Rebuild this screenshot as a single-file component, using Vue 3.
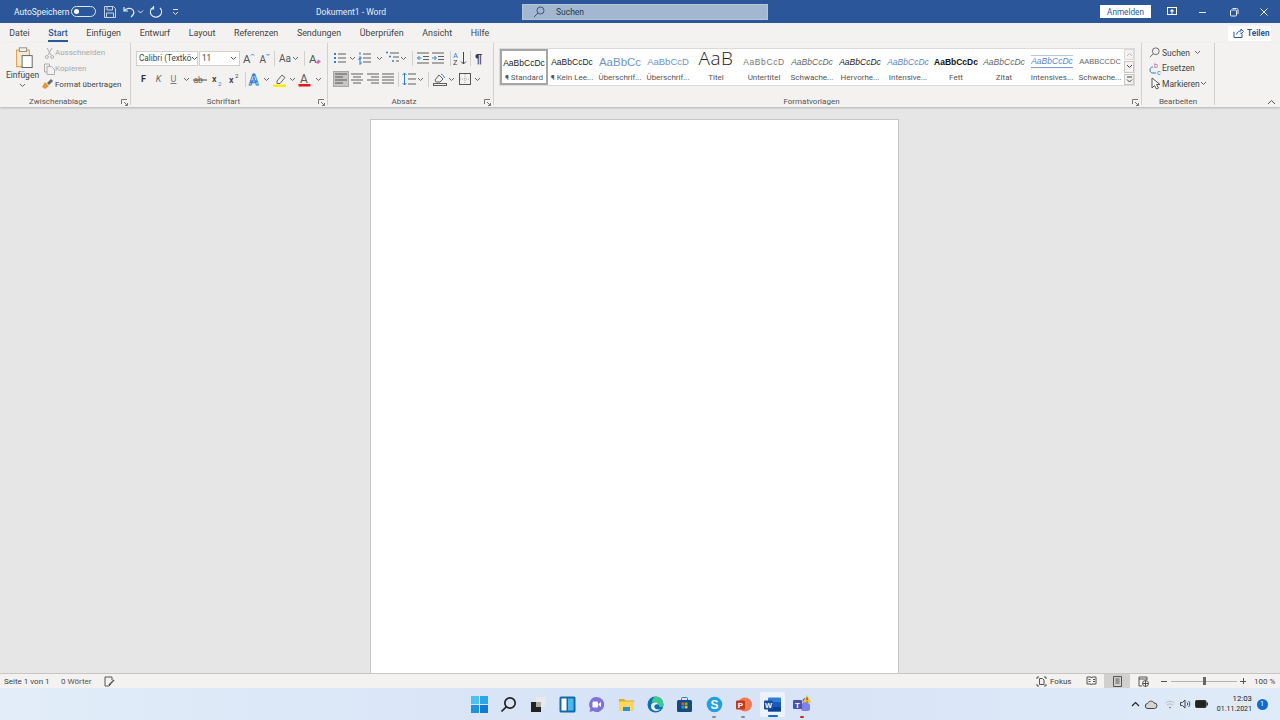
<script setup>
const blue = '#2f7fd0'
const gray = '#5f5f5f'
const dark = '#444'
const tf = 'font-family="Roboto, sans-serif"'

const icons = {
  bullets: `<g fill="${blue}"><rect x="2" y="3" width="2" height="2"/><rect x="2" y="7" width="2" height="2"/><rect x="2" y="11" width="2" height="2"/></g><path d="M6 4h8M6 8h8M6 12h8" stroke="${gray}"/>`,
  numbers: `<path d="M3 2v3M2 7h2v1.500H2V10h2M2 12h2v2H2" stroke="${blue}" fill="none"/><path d="M6 4h8M6 8h8M6 12h8" stroke="${gray}"/>`,
  multi: `<path d="M1 2.500h2M4 6.500h2M7 11h2" stroke="${blue}" stroke-width="1.500"/><path d="M5 3h9M8 7h6M11 11h3" stroke="${gray}"/>`,
  outdent: `<path d="M2 3h12M8 6.500h6M8 9.500h6M2 13h12" stroke="${gray}"/><path d="M6.500 8H2.500M4.500 6 2.500 8l2 2" stroke="${blue}" fill="none"/>`,
  indent: `<path d="M2 3h12M8 6.500h6M8 9.500h6M2 13h12" stroke="${gray}"/><path d="M2 8h4M4.500 6l2 2-2 2" stroke="${blue}" fill="none"/>`,
  sort: `<text x="1" y="7.500" font-size="7.500" fill="${blue}" ${tf}>A</text><text x="1" y="15" font-size="7.500" fill="${dark}" ${tf}>Z</text><path d="M11.500 2v12M9 11.500l2.500 2.500 2.500-2.500" stroke="${dark}" fill="none"/>`,
  pilcrow: `<text x="3" y="13" font-size="13" font-weight="700" fill="#3c3c3c" font-family="Liberation Sans, sans-serif">¶</text>`,
  left: `<path d="M2 3h12M2 6h8M2 9h12M2 12h8" stroke="#555" stroke-width="1.100"/>`,
  center: `<path d="M2 3h12M4 6h8M2 9h12M4 12h8" stroke="${gray}" stroke-width="1.100"/>`,
  right: `<path d="M2 3h12M6 6h8M2 9h12M6 12h8" stroke="${gray}" stroke-width="1.100"/>`,
  justify: `<path d="M2 3h12M2 6h12M2 9h12M2 12h12" stroke="${gray}" stroke-width="1.100"/>`,
  line: `<path d="M7 3h8M7 8h8M7 13h8" stroke="${gray}"/><path d="M3.500 2v12M1.500 4l2-2 2 2M1.500 12l2 2 2-2" stroke="${blue}" fill="none"/>`,
  shade: `<path d="M3 9l4-5 4 4-3 3H4z" fill="none" stroke="${gray}"/><path d="M9 3c2 1 3 2 3.500 4" stroke="${blue}" fill="none"/><rect x="1.500" y="12.500" width="13" height="2" fill="#f3f2f1" stroke="${gray}"/>`,
  borders: `<rect x="2.500" y="2.500" width="11" height="11" fill="none" stroke="#555"/><path d="M8 3v10M3 8h10" stroke="#aaa" stroke-dasharray="1 1"/>`,
  grow: `<text x="3" y="13" font-size="11.500" fill="#555" ${tf}>A</text><path d="M11 5.500l1.500-1.500 1.500 1.500" stroke="${blue}" fill="none"/>`,
  shrink: `<text x="3.500" y="13" font-size="10" fill="#555" ${tf}>A</text><path d="M10.500 4l1.500 1.500 1.500-1.500" stroke="${blue}" fill="none"/>`,
  clear: `<text x="3" y="12.500" font-size="11.500" fill="#555" ${tf}>A</text><path d="M9.500 12.500l3-3 2.500 2-3 2.500z" fill="#c774c7"/>`,
  strike: `<text x="1.500" y="12" font-size="8.500" fill="#666" ${tf}>ab</text><path d="M1 9h14" stroke="#444"/>`,
  sub: `<text x="3" y="11" font-size="9" font-weight="600" fill="#444" ${tf}>x</text><text x="9" y="14.500" font-size="6" fill="${blue}" ${tf}>2</text>`,
  sup: `<text x="3" y="12" font-size="9" font-weight="600" fill="#444" ${tf}>x</text><text x="9" y="7" font-size="6" fill="${dark}" ${tf}>2</text>`,
  effect: `<text x="2" y="14" font-size="14" font-weight="700" fill="#fff" stroke="${blue}" stroke-width=".9" ${tf}>A</text>`,
  marker: `<path d="M5 10l5-6 3 2.500-5 6H5z" fill="none" stroke="#666"/><rect x="1" y="13.500" width="13" height="2.500" fill="#ffeb00"/>`,
  color: `<text x="3" y="11.500" font-size="12" fill="#555" ${tf}>A</text><rect x="1.500" y="13" width="12" height="2.500" fill="#e8141c"/>`
}

const fontRow = [
  { w: 15, label: 'F', cls: 'bold' }, { w: 15, label: 'K', cls: 'italic' }, { w: 15, label: 'U', cls: 'under' }, { w: 11, chev: true },
  { w: 16, icon: 'strike' }, { w: 17, icon: 'sub' }, { w: 17, icon: 'sup' }, { w: 6, sep: true },
  { w: 13, icon: 'effect' }, { w: 10, chev: true }, { w: 18, icon: 'marker' }, { w: 6, chev: true },
  { w: 20, icon: 'color' }, { w: 6, chev: true }
]
const paraTop = [
  { w: 14, icon: 'bullets' }, { w: 11, chev: true }, { w: 14, icon: 'numbers' }, { w: 14, chev: true },
  { w: 14, icon: 'multi' }, { w: 6, chev: true }, { w: 12, sep: true }, { w: 10, icon: 'outdent' },
  { w: 20, icon: 'indent' }, { w: 4, sep: true }, { w: 15, icon: 'sort' }, { w: 6, sep: true }, { w: 14, icon: 'pilcrow' }
]
const paraBottom = [
  { w: 16, icon: 'left', on: true }, { w: 16, icon: 'center' }, { w: 15, icon: 'right' }, { w: 16, icon: 'justify' },
  { w: 4, sep: true }, { w: 18, icon: 'line' }, { w: 4, chev: true }, { w: 12, sep: true }, { w: 12, icon: 'shade' },
  { w: 10, chev: true }, { w: 18, icon: 'borders' }, { w: 6, chev: true }
]

const tabs = ['Datei', 'Start', 'Einfügen', 'Entwurf', 'Layout', 'Referenzen', 'Sendungen', 'Überprüfen', 'Ansicht', 'Hilfe']

const styles = [
  { label: '¶ Standard', cls: 's-normal', text: 'AaBbCcDc', on: true },
  { label: '¶ Kein Lee...', cls: 's-normal', text: 'AaBbCcDc' },
  { label: 'Überschrif...', cls: 's-h1', text: 'AaBbCc' },
  { label: 'Überschrif...', cls: 's-h2', text: 'AaBbCcD' },
  { label: 'Titel', cls: 's-title', text: 'AaB' },
  { label: 'Untertitel', cls: 's-sub', text: 'AaBbCcD' },
  { label: 'Schwache...', cls: 's-em', text: 'AaBbCcDc' },
  { label: 'Hervorhe...', cls: 's-em2', text: 'AaBbCcDc' },
  { label: 'Intensive...', cls: 's-em3', text: 'AaBbCcDc' },
  { label: 'Fett', cls: 's-bold', text: 'AaBbCcDc' },
  { label: 'Zitat', cls: 's-em', text: 'AaBbCcDc' },
  { label: 'Intensives...', cls: 's-quote', text: 'AaBbCcDc' },
  { label: 'Schwache...', cls: 's-caps', text: 'AABBCCDC' }
]
</script>

<template>
  <div class="app">
    <header class="title">
      <div class="title-left">
        <span class="auto">AutoSpeichern</span>
        <span class="toggle"><i></i></span>
        <svg class="ti save" width="14" height="14" viewBox="0 0 14 14" fill="none" stroke="#c6d3e6"><path d="M1.500 1.500h9l2 2v9h-11z"/><path d="M4 1.500v3.500h5.500v-3.500M3.500 12.500V8h7v4.500"/></svg>
        <svg class="ti undo" width="14" height="14" viewBox="0 0 14 14" fill="none" stroke="#e4eaf3" stroke-width="1.200"><path d="M2 2v4h4M2.200 6C4 3 9 2.500 11 5c1.500 2.200.5 5-2 7"/></svg>
        <svg class="ti drop" width="7" height="7" viewBox="0 0 7 7" fill="none" stroke="#dde5f0"><path d="M1 2.500l2.500 2.500L6 2.500"/></svg>
        <svg class="ti redo" width="14" height="14" viewBox="0 0 14 14" fill="none" stroke="#e4eaf3" stroke-width="1.200"><path d="M4 2.500C1.500 4 .8 7 2 9.500c1.800 3 6.500 3.500 9 1 2.200-2.400 2-5.500 0-7.500"/><path d="M4.500 1v3h-3"/></svg>
        <svg class="ti qat" width="7" height="8" viewBox="0 0 7 8" fill="none" stroke="#dde5f0"><path d="M1 1.500h5M1 4l2.500 2.500L6 4"/></svg>
      </div>
      <div class="doc-name">Dokument1 - Word</div>
      <div class="search">
        <svg width="12" height="12" viewBox="0 0 12 12" fill="none" stroke="#3c5478"><circle cx="7.500" cy="4.500" r="3.500"/><path d="M5 7l-4 4"/></svg>
        <span>Suchen</span>
      </div>
      <div class="title-right">
        <button class="login">Anmelden</button>
        <svg class="win w-ribbon" width="10" height="9" viewBox="0 0 10 9" fill="#fff"><rect x=".5" y=".5" width="9" height="7" fill="none" stroke="#fff"/><path d="M5 2l2.500 2.500h-5z"/><rect x="4.500" y="4" width="1" height="3"/></svg>
        <svg class="win w-min" width="10" height="10" viewBox="0 0 10 10" stroke="#e8edf5"><path d="M1 5.500h7"/></svg>
        <svg class="win w-max" width="10" height="10" viewBox="0 0 10 10" fill="none" stroke="#e8edf5"><rect x="1.500" y="3" width="6" height="6" rx="1"/><path d="M3.500 1.500h4a1.500 1.500 0 0 1 1.500 1.500v4"/></svg>
        <svg class="win w-close" width="10" height="10" viewBox="0 0 10 10" stroke="#e8edf5"><path d="M1.500 1.500l7 7M8.500 1.500l-7 7"/></svg>
      </div>
    </header>

    <nav class="tabs">
      <span v-for="t in tabs" :key="t" class="tab" :class="{ active: t === 'Start' }">{{ t }}</span>
      <span class="share">
        <svg width="11" height="10" viewBox="0 0 11 10" fill="none" stroke="#2b579a"><path d="M1 4v5.500h8V6"/><path d="M3.500 6.500C4 4 6 3 8 3V1l2.500 2.500L8 6V4.500"/></svg>
        Teilen
      </span>
    </nav>

    <section class="ribbon">
      <div class="group g-clip">
        <div class="clip-body">
          <div class="paste">
            <svg width="22" height="22" viewBox="0 0 24 24" fill="none">
              <path d="M5 4.500h14v18H5z" fill="#f4ead8" stroke="#e5a44d" stroke-width="1.200"/>
              <rect x="8" y="2" width="8" height="4" fill="#f3f2f1" stroke="#8a8a8a"/>
              <rect x="11" y="10.500" width="11" height="13" fill="#fff" stroke="#5a5a5a"/>
            </svg>
            <span class="paste-label">Einfügen</span>
            <svg class="chev" width="7" height="5" viewBox="0 0 7 5" fill="none" stroke="#666"><path d="M1 1l2.500 2.500L6 1"/></svg>
          </div>
          <div class="clip-tools">
            <div class="clip-row off">
              <svg width="11" height="12" viewBox="0 0 11 12" fill="none" stroke="#aeaeae"><path d="M3 1l4 7M8 1L4 8"/><circle cx="2.800" cy="10" r="1.500"/><circle cx="8.200" cy="10" r="1.500"/></svg>
              <span>Ausschneiden</span>
            </div>
            <div class="clip-row off">
              <svg width="11" height="12" viewBox="0 0 11 12" fill="none" stroke="#aeaeae"><path d="M.5 1h5v2M.5 1v8H3"/><path d="M3 3.500h4.500l3 3V11.500H3z"/></svg>
              <span>Kopieren</span>
            </div>
            <div class="clip-row">
              <svg width="11" height="12" viewBox="0 0 11 12"><path d="M0 9l3-5 4 4-4 3z" fill="#e8923a"/><path d="M5 5l4-4 2 2-4 4z" fill="#666"/></svg>
              <span>Format übertragen</span>
            </div>
          </div>
        </div>
        <div class="group-label">Zwischenablage<svg class="launch" width="7" height="7" viewBox="0 0 7 7" fill="none" stroke="#777"><path d="M.5 5V.5H6M3 3l3.500 3.500M6.500 4v2.500H4"/></svg></div>
      </div>

      <div class="group g-font">
        <div class="tool-body">
          <div class="row font-top">
            <div class="combo c-font"><span>Calibri (Textkö</span><svg width="7" height="5" viewBox="0 0 7 5" fill="none" stroke="#555"><path d="M1 1l2.500 2.500L6 1"/></svg></div>
            <div class="combo c-size"><span>11</span><svg width="7" height="5" viewBox="0 0 7 5" fill="none" stroke="#555"><path d="M1 1l2.500 2.500L6 1"/></svg></div>
            <span class="cell w16"><svg width="16" height="16" viewBox="0 0 16 16" v-html="icons.grow"></svg></span>
            <span class="cell w16"><svg width="16" height="16" viewBox="0 0 16 16" v-html="icons.shrink"></svg></span>
            <span class="cell w4"><i class="sep"></i></span>
            <span class="aa">Aa<svg width="7" height="5" viewBox="0 0 7 5" fill="none" stroke="#666"><path d="M1 1l2.500 2.500L6 1"/></svg></span>
            <span class="cell w6"><i class="sep"></i></span>
            <span class="cell w14"><svg width="16" height="16" viewBox="0 0 16 16" v-html="icons.clear"></svg></span>
          </div>
          <div class="row">
            <span v-for="(it, i) in fontRow" :key="i" class="cell" :class="it.cls" :style="{ width: it.w + 'px' }">
              <i v-if="it.sep" class="sep"></i>
              <svg v-else-if="it.chev" width="7" height="5" viewBox="0 0 7 5" fill="none" stroke="#666"><path d="M1 1l2.500 2.500L6 1"/></svg>
              <svg v-else-if="it.icon" width="16" height="16" viewBox="0 0 16 16" v-html="icons[it.icon]"></svg>
              <template v-else>{{ it.label }}</template>
            </span>
          </div>
        </div>
        <div class="group-label">Schriftart<svg class="launch" width="7" height="7" viewBox="0 0 7 7" fill="none" stroke="#777"><path d="M.5 5V.5H6M3 3l3.500 3.500M6.500 4v2.500H4"/></svg></div>
      </div>

      <div class="group g-para">
        <div class="tool-body">
          <div class="row">
            <span v-for="(it, i) in paraTop" :key="i" class="cell" :style="{ width: it.w + 'px' }">
              <i v-if="it.sep" class="sep"></i>
              <svg v-else-if="it.chev" width="7" height="5" viewBox="0 0 7 5" fill="none" stroke="#666"><path d="M1 1l2.500 2.500L6 1"/></svg>
              <svg v-else width="16" height="16" viewBox="0 0 16 16" v-html="icons[it.icon]"></svg>
            </span>
          </div>
          <div class="row">
            <span v-for="(it, i) in paraBottom" :key="i" class="cell" :class="{ on: it.on }" :style="{ width: it.w + 'px' }">
              <i v-if="it.sep" class="sep"></i>
              <svg v-else-if="it.chev" width="7" height="5" viewBox="0 0 7 5" fill="none" stroke="#666"><path d="M1 1l2.500 2.500L6 1"/></svg>
              <svg v-else width="16" height="16" viewBox="0 0 16 16" v-html="icons[it.icon]"></svg>
            </span>
          </div>
        </div>
        <div class="group-label">Absatz<svg class="launch" width="7" height="7" viewBox="0 0 7 7" fill="none" stroke="#777"><path d="M.5 5V.5H6M3 3l3.500 3.500M6.500 4v2.500H4"/></svg></div>
      </div>

      <div class="group g-styles">
        <div class="gallery">
          <div v-for="(s, i) in styles" :key="i" class="style" :class="{ on: s.on }">
            <span class="preview" :class="s.cls">{{ s.text }}</span>
            <span class="style-label">{{ s.label }}</span>
          </div>
          <div class="scroller">
            <span class="sc dim"><svg width="7" height="5" viewBox="0 0 7 5" fill="none" stroke="#bbb"><path d="M1 4l2.500-2.500L6 4"/></svg></span>
            <span class="sc"><svg width="7" height="5" viewBox="0 0 7 5" fill="none" stroke="#444"><path d="M1 1l2.500 2.500L6 1"/></svg></span>
            <span class="sc"><svg width="7" height="7" viewBox="0 0 7 7" fill="none" stroke="#444"><path d="M1 1h5M1 3.500l2.500 2.500L6 3.500"/></svg></span>
          </div>
        </div>
        <div class="group-label">Formatvorlagen<svg class="launch" width="7" height="7" viewBox="0 0 7 7" fill="none" stroke="#777"><path d="M.5 5V.5H6M3 3l3.500 3.500M6.500 4v2.500H4"/></svg></div>
      </div>

      <div class="group g-edit">
        <div class="edit-body">
          <div class="edit-row">
            <svg class="e-find" width="11" height="11" viewBox="0 0 13 13" fill="none" stroke="#555"><circle cx="8" cy="5" r="4"/><path d="M5 8l-4 4"/></svg>
            <span>Suchen</span>
            <svg class="gap-chev" width="7" height="5" viewBox="0 0 7 5" fill="none" stroke="#666"><path d="M1 1l2.500 2.500L6 1"/></svg>
          </div>
          <div class="edit-row">
            <svg width="13" height="13" viewBox="0 0 13 13"><text x="5" y="6" font-size="7" fill="#b45bb4" font-family="Roboto, sans-serif">b</text><text x="8" y="13" font-size="7" fill="#2f7fd0" font-family="Roboto, sans-serif">c</text><path d="M1 8c0-2 1-3 3-3M7 11H4C2 11 1 10 1 8" fill="none" stroke="#2f7fd0"/></svg>
            <span>Ersetzen</span>
          </div>
          <div class="edit-row">
            <svg width="13" height="13" viewBox="0 0 13 13" fill="#fff" stroke="#555"><path d="M3 1v10l2.500-2.500L7.500 12l2-1-2-3.500H11z"/></svg>
            <span>Markieren</span>
            <svg class="tight-chev" width="7" height="5" viewBox="0 0 7 5" fill="none" stroke="#666"><path d="M1 1l2.500 2.500L6 1"/></svg>
          </div>
        </div>
        <div class="group-label">Bearbeiten</div>
      </div>

      <div class="collapse">
        <svg width="9" height="6" viewBox="0 0 9 6" fill="none" stroke="#555"><path d="M1 5l3.500-3.500L8 5"/></svg>
      </div>
    </section>

    <main class="canvas">
      <div class="page"></div>
    </main>

    <footer class="status">
      <span class="st-page">Seite 1 von 1</span>
      <span class="st-words">0 Wörter</span>
      <svg class="st-proof" width="11" height="11" viewBox="0 0 11 11" fill="none" stroke="#555"><path d="M1 1h7v3M1 1v9h4l2-2"/><path d="M5 9l5-5" stroke-width="1.500"/></svg>
      <span class="st-space"></span>
      <svg width="11" height="11" viewBox="0 0 11 11" fill="none" stroke="#555"><path d="M3 1H1v2M8 1h2v2M1 8v2h2M8 10h2V8"/><path d="M3.500 2.500h3l1.500 1.500v4.500H3.500z"/></svg>
      <span class="fokus">Fokus</span>
      <span class="view"><svg width="11" height="10" viewBox="0 0 11 10" fill="none" stroke="#555"><path d="M1 1h4l.5 1L6 1h4v7H6l-.5 1L5 8H1zM2.500 3.500h2M7 3.500h2M2.500 5.500h2M7 5.500h2"/></svg></span>
      <span class="view on"><svg width="9" height="11" viewBox="0 0 9 11" fill="none" stroke="#555"><path d="M.5.5h8v10h-8zM2.500 3h4M2.500 5h4M2.500 7h4"/></svg></span>
      <span class="view"><svg width="11" height="11" viewBox="0 0 11 11" fill="none" stroke="#555"><path d="M1 1h8v3M1 1v9h3M1 3h8"/><circle cx="7.500" cy="7.500" r="3"/><path d="M4.500 7.500h6M7.500 4.500v6"/></svg></span>
      <span class="zoom-minus"></span>
      <span class="track"><i></i></span>
      <span class="zoom-plus"></span>
      <span class="pct">100 %</span>
    </footer>

    <div class="taskbar">
      <div class="apps">
        <span class="app-ic"><svg width="17" height="17" viewBox="0 0 17 17"><rect width="8" height="8" fill="#4cc2ee"/><rect x="9" width="8" height="8" fill="#2ba7e5"/><rect y="9" width="8" height="8" fill="#1b93dd"/><rect x="9" y="9" width="8" height="8" fill="#0f7cd0"/></svg></span>
        <span class="app-ic"><svg width="17" height="17" viewBox="0 0 17 17" fill="none" stroke="#222" stroke-width="1.700"><circle cx="10" cy="7" r="5.200"/><path d="M6.200 10.800L1.500 15.500"/></svg></span>
        <span class="app-ic"><svg width="17" height="17" viewBox="0 0 17 17"><rect x="6" y="1" width="10" height="10" fill="#e9e9ec"/><rect x="1" y="6" width="10" height="10" fill="#222"/><rect x="6" y="6" width="5" height="5" fill="#aaa"/></svg></span>
        <span class="app-ic"><svg width="17" height="17" viewBox="0 0 17 17"><rect x=".5" y=".5" width="16" height="16" rx="1.500" fill="#1568a8"/><rect x="2.500" y="2.500" width="5" height="12" fill="#fff"/><rect x="9" y="2.500" width="5.500" height="12" fill="#4cb8ee"/></svg></span>
        <span class="app-ic"><svg width="17" height="17" viewBox="0 0 17 17"><path d="M8.500 1a7.500 7.500 0 1 1-3.500 14l-3.500 1 .8-3.500A7.500 7.500 0 0 1 8.500 1z" fill="#7f74d8"/><rect x="4.500" y="5.500" width="5.500" height="6" rx="1.200" fill="#fff"/><path d="M10.500 8l2.500-2v5l-2.500-2z" fill="#fff"/></svg></span>
        <span class="app-ic"><svg width="17" height="17" viewBox="0 0 17 17"><path d="M1 3h5l1.500 1.500H16v3H1z" fill="#e5a82b"/><rect x="1" y="5.500" width="15" height="9.500" rx="1" fill="#fbd75c"/><rect x="5" y="11" width="7" height="4" fill="#2d8fd8"/></svg></span>
        <span class="app-ic"><svg width="17" height="17" viewBox="0 0 17 17"><circle cx="8.500" cy="8.500" r="8" fill="#0f6fb4"/><path d="M8.500.5a8 8 0 0 1 8 8c0 2-2 3-4 2.500-.5-3.500-4-5.500-8-4.500C5.500 3 7 .5 8.500.5z" fill="#3ec98e"/><path d="M4.500 8c1-2 6-2.500 7 .5-2.500-1-5 .5-4 3 .6 1.500 3.500 2.600 6 1.500-2.500 3-7.500 2.300-9-.5-.8-1.500-.6-3 0-4.500z" fill="#e6f0fa"/></svg></span>
        <span class="app-ic"><svg width="17" height="17" viewBox="0 0 17 17"><path d="M5.500 4V2.500a1 1 0 0 1 1-1h4a1 1 0 0 1 1 1V4" fill="none" stroke="#2b7cc0"/><rect x="1" y="4" width="15" height="12" rx="1.500" fill="#134a82"/><rect x="5.500" y="6.500" width="2.700" height="2.700" fill="#f25022"/><rect x="8.800" y="6.500" width="2.700" height="2.700" fill="#7fba00"/><rect x="5.500" y="9.800" width="2.700" height="2.700" fill="#00a4ef"/><rect x="8.800" y="9.800" width="2.700" height="2.700" fill="#ffb900"/></svg></span>
        <span class="app-ic dot"><svg width="17" height="17" viewBox="0 0 17 17"><circle cx="8.500" cy="8.500" r="7.800" fill="#1fa0e0"/><text x="8.500" y="12.800" font-size="12" font-weight="700" fill="#fff" text-anchor="middle" font-family="Liberation Sans, sans-serif">S</text></svg></span>
        <span class="app-ic dot"><svg width="17" height="17" viewBox="0 0 17 17"><circle cx="10" cy="8.500" r="7" fill="#ee7c52"/><rect x="1" y="4.500" width="9" height="9" rx="1" fill="#c4381b"/><text x="5.500" y="12" font-size="8" font-weight="700" fill="#fff" text-anchor="middle" font-family="Liberation Sans, sans-serif">P</text></svg></span>
        <span class="app-ic current"><svg width="17" height="17" viewBox="0 0 17 17"><rect x="4" y="1.500" width="13" height="14" rx="1" fill="#2f7fd6"/><rect x="4" y="6" width="13" height="5" fill="#185abd"/><rect x="4" y="11" width="13" height="4.500" fill="#103f91"/><rect x="0" y="4.500" width="9" height="9" rx="1" fill="#1450a8"/><text x="4.500" y="11.800" font-size="7.500" font-weight="700" fill="#fff" text-anchor="middle" font-family="Liberation Sans, sans-serif">W</text></svg></span>
        <span class="app-ic alert">
          <svg width="20" height="18" viewBox="0 0 20 18"><circle cx="13.500" cy="6" r="3" fill="#5f63c9"/><rect x="9" y="8" width="9" height="8" rx="2.500" fill="#7b83eb"/><rect x="1" y="5" width="9" height="9" rx="1" fill="#4b50b5"/><text x="5.500" y="12.500" font-size="8" font-weight="700" fill="#fff" text-anchor="middle" font-family="Liberation Sans, sans-serif">T</text><path d="M15 0l4.500 7.500h-9z" fill="#f7c23c"/><path d="M15 2.500v2.500M15 5.800v.8" stroke="#333"/></svg>
        </span>
      </div>
      <div class="tray">
        <svg width="9" height="6" viewBox="0 0 9 6" fill="none" stroke="#222" stroke-width="1.200"><path d="M1 5l3.500-3.500L8 5"/></svg>
        <svg class="t-cloud" width="12" height="9" viewBox="0 0 12 9"><path d="M3 8.500a2.500 2.500 0 0 1-.4-5C3.500 1 7.500 0 9 3a2.700 2.700 0 0 1 .5 5.500z" fill="#d5d5d5" stroke="#444"/></svg>
        <svg class="t-wifi" width="10" height="9" viewBox="0 0 10 9" fill="none" stroke="#b8b8b8"><path d="M.5 3c2.500-2.200 6.500-2.200 9 0M2 5c1.500-1.400 4.500-1.400 6 0"/><circle cx="5" cy="7.500" r=".8" fill="#666" stroke="none"/></svg>
        <svg class="t-vol" width="11" height="10" viewBox="0 0 11 10" fill="none" stroke="#444"><path d="M.5 3.500H2.500L5 1v8L2.500 6.500H.5zM7 3.500a2 2 0 0 1 0 3M8.500 2a4 4 0 0 1 0 6"/></svg>
        <svg class="t-bat" width="13" height="8" viewBox="0 0 13 8"><rect x=".5" y=".5" width="10.500" height="7" rx="1" fill="#222" stroke="#333"/><rect x="11.500" y="2.500" width="1.500" height="3" fill="#333"/></svg>
        <div class="clock"><span>12:03</span><span class="date">01.11.2021</span></div>
        <span class="notif">1</span>
      </div>
    </div>
  </div>
</template>

<style>
html, body { margin: 0; background: #e6e6e6; }
</style>

<style scoped>
.app {
  width: 1280px; height: 720px; overflow: hidden; display: flex; flex-direction: column;
  font-family: Roboto, "Noto Sans", sans-serif; font-size: 8.5px; color: #444;
}
svg { display: block; flex: none; overflow: visible; }

.title { height: 23px; background: #2b579a; display: flex; align-items: center; flex: none; }
.title-left { width: 316px; display: flex; align-items: center; padding-left: 14px; box-sizing: border-box; flex: none; color: #eef2f8; }
.auto { width: 57px; flex: none; white-space: nowrap; }
.toggle { width: 25px; height: 11px; border: 1px solid #dfe6f0; border-radius: 7px; box-sizing: border-box; display: flex; align-items: center; padding-left: 2px; flex: none; }
.toggle i { width: 5px; height: 5px; background: #fff; border-radius: 50%; }
.save { margin-left: 7px; }
.undo { margin-left: 5px; }
.drop { margin-left: 1px; }
.redo { margin-left: 5px; }
.qat { margin-left: 8.500px; }
.doc-name { width: 206px; flex: none; color: #e6ecf4; }
.search { width: 246px; height: 16px; background: #a3b7d0; border: 1px solid #b4c4d9; box-sizing: border-box; display: flex; align-items: center; padding-left: 10px; gap: 11px; color: #27374f; flex: none; }
.title-right { flex: 1; display: flex; align-items: center; }
.login { margin-left: 332px; width: 51px; height: 13px; border: 0; background: #fff; color: #2b579a; font: 8.2px Roboto, sans-serif; padding: 0; flex: none; }
.w-ribbon { margin-left: 16px; }
.w-min { margin-left: 21px; }
.w-max { margin-left: 21px; }
.w-close { margin-left: 20px; }

.tabs { height: 20px; background: #f3f2f1; display: flex; align-items: center; flex: none; position: relative; }
.tab { padding: 0 9.3px; line-height: 20px; height: 20px; color: #444; font-size: 8.9px; position: relative; box-sizing: border-box; white-space: nowrap; }
.tab.active { color: #2b579a; font-weight: 500; }
.tab.active::after { content: ""; position: absolute; left: 9.3px; right: 9.3px; bottom: 1px; height: 2px; background: #2b579a; }
.share { margin-left: auto; margin-right: 9px; width: 43px; height: 15px; background: #fff; color: #2b579a; font-size: 8.2px; font-weight: 700; display: flex; align-items: center; gap: 3px; padding-left: 5px; box-sizing: border-box; }

.ribbon { height: 64px; background: #f3f2f1; display: flex; flex: none; box-shadow: 0 1px 2px rgba(0, 0, 0, .22); position: relative; z-index: 1; }
.group { display: flex; flex-direction: column; box-sizing: border-box; height: 62px; border-right: 1px solid #d2d0ce; flex: none; }
.group-label { margin-top: auto; height: 13px; line-height: 19px; text-align: center; color: #555; font-size: 8px; position: relative; flex: none; }
.launch { position: absolute; right: 2px; bottom: -1px; }
.g-clip .group-label { padding-right: 14px; }
.g-font .group-label { padding-right: 16px; }
.g-para .group-label { padding-right: 18px; }
.g-styles .group-label { padding-right: 17px; }

.g-clip { width: 131px; }
.clip-body { display: flex; height: 49px; }
.paste { width: 42px; padding-left: 3px; box-sizing: border-box; display: flex; flex-direction: column; align-items: center; padding-top: 3px; flex: none; }
.paste-label { line-height: 13px; color: #444; margin-top: 1px; }
.paste .chev { margin-top: 1px; }
.clip-tools { display: flex; flex-direction: column; padding-top: 2px; font-size: 8px; }
.clip-row { height: 16px; display: flex; align-items: center; gap: 2px; color: #444; white-space: nowrap; }
.clip-row.off { color: #a8a8a8; padding-left: 2px; gap: 0; }

.g-font { width: 197px; padding-left: 5px; }
.g-para { width: 166px; padding-left: 5px; }
.tool-body { display: flex; flex-direction: column; padding-top: 7px; gap: 5px; }
.row { height: 16px; display: flex; align-items: center; }
.combo { height: 15px; background: #fff; border: 1px solid #d2d0ce; box-sizing: border-box; display: flex; align-items: center; justify-content: space-between; padding: 0 2px; color: #444; flex: none; white-space: nowrap; overflow: hidden; font-size: 8.2px; }
.c-font { width: 62px; }
.c-size { width: 41px; margin-left: 1px; }
.cell { height: 16px; display: flex; align-items: center; justify-content: center; flex: none; }
.w4 { width: 4px; }
.w6 { width: 6px; }
.w14 { width: 14px; }
.w16 { width: 16px; }
.sep { display: block; width: 1px; height: 15px; background: #d2d0ce; }
.aa { width: 25px; height: 16px; display: flex; align-items: center; gap: 1px; padding-left: 3px; box-sizing: border-box; font-size: 10px; flex: none; color: #555; }
.bold { font-weight: 700; font-size: 9px; color: #333; }
.italic { font-style: italic; font-size: 9px; color: #666; }
.under { text-decoration: underline; font-size: 9px; color: #777; }
.on:not(.style):not(.view) { background: #c8c6c4; outline: 1px solid #a6a6a6; outline-offset: -1px; }

.g-styles { width: 648px; padding-left: 5px; }
.gallery { margin-top: 5px; width: 636px; height: 38px; background: #fff; border: 1px solid #dcdad8; box-sizing: border-box; display: flex; flex: none; }
.style { width: 48px; height: 36px; display: flex; flex-direction: column; align-items: center; box-sizing: border-box; overflow: hidden; flex: none; }
.style.on { border: 2px solid #a6a6a6; }
.preview { height: 23px; overflow: hidden; white-space: nowrap; line-height: 26px; font-family: "Liberation Sans", sans-serif; font-size: 8.5px; color: #222; display: block; flex: none; }
.style.on .preview { height: 21px; line-height: 24px; }
.style-label { line-height: 12px; font-size: 8px; color: #555; white-space: nowrap; }
.s-h1 { font-size: 11.500px; color: #6f94c8; }
.s-h2 { font-size: 9.500px; color: #6f94c8; }
.s-title { font-family: "Open Sans", sans-serif; font-weight: 300; font-size: 19px; color: #222; line-height: 19px; letter-spacing: .5px; overflow: visible; }
.s-sub { color: #777; letter-spacing: .6px; }
.s-em { font-style: italic; color: #666; }
.s-em2 { font-style: italic; color: #222; }
.s-em3 { font-style: italic; color: #5a86d0; }
.s-bold { font-weight: 700; color: #111; }
.s-quote { box-sizing: border-box; font-style: italic; color: #5a86d0; height: 13px; line-height: 11px; margin-top: 6px; margin-bottom: 4px; border-top: 1px solid #b5c6e6; border-bottom: 1px solid #7d9ad6; }
.s-caps { color: #666; font-size: 7.500px; }
.scroller { margin-left: auto; width: 10px; display: flex; flex-direction: column; gap: 1px; flex: none; }
.sc { height: 12px; background: #f3f2f1; border: 1px solid #c8c6c4; box-sizing: border-box; display: flex; align-items: center; justify-content: center; }
.sc.dim { border-color: #dcdad8; }

.g-edit { width: 73px; padding-left: 7px; }
.g-edit .group-label { margin-left: -7px; }
.edit-body { display: flex; flex-direction: column; padding-top: 2px; }
.edit-row { height: 15.500px; display: flex; align-items: center; }
.e-find { margin-right: 2px; }
.gap-chev { margin-left: 4px; }
.tight-chev { margin-left: 0; }
.collapse { margin-left: auto; margin-top: auto; margin-right: 4px; margin-bottom: 2px; }

.canvas { flex: 1; min-height: 0; background: #e6e6e6; overflow: hidden; padding-top: 12px; box-sizing: border-box; display: flex; padding-left: 370px; }
.page { width: 529px; height: 700px; background: #fff; border: 1px solid #c6c6c6; box-sizing: border-box; flex: none; }

.status { height: 15px; box-sizing: border-box; background: #f3f2f1; border-top: 1px solid #c8c6c4; display: flex; align-items: center; flex: none; color: #444; font-size: 8px; position: relative; }
.st-page { margin-left: 4px; width: 57px; flex: none; }
.st-words { width: 43px; flex: none; color: #555; }
.st-space { flex: 1; }
.fokus { margin-left: 3px; width: 28px; flex: none; }
.view { width: 26px; height: 14px; display: flex; align-items: center; justify-content: center; flex: none; }
.view.on { background: #d2d0ce; }
.zoom-minus { width: 6px; height: 1px; background: #555; margin-left: 5px; flex: none; }
.track { width: 66px; height: 1px; background: #b5b3b1; margin-left: 4px; position: relative; flex: none; }
.track i { position: absolute; left: 32px; top: -3.500px; width: 3px; height: 8px; background: #666; }
.zoom-plus { width: 6px; height: 6px; margin-left: 3px; flex: none; background: linear-gradient(#555, #555) center/6px 1px no-repeat, linear-gradient(#555, #555) center/1px 6px no-repeat; }
.pct { margin-left: 8px; width: 26px; flex: none; white-space: nowrap; }

.taskbar { height: 32px; flex: none; background: linear-gradient(90deg, #e2edf9 0%, #d6e2f6 50%, #dfebf8 100%); display: flex; align-items: center; }
.apps { display: flex; margin-left: 465px; width: 640px; flex: none; }
.app-ic { width: 29.300px; height: 25px; display: flex; align-items: center; justify-content: center; position: relative; flex: none; }
.dot::after { content: ""; position: absolute; bottom: -1px; left: 12.500px; width: 4px; height: 2px; background: #8c8c8c; border-radius: 1px; }
.current { background: #eef3fb; background-clip: content-box; padding: 0 2px; box-sizing: border-box; border-radius: 3px; }
.current::after { content: ""; position: absolute; bottom: 0; left: 9.600px; width: 10px; height: 2px; background: #0f6fc8; border-radius: 1px; }
.alert::after { content: ""; position: absolute; bottom: -1px; left: 12.500px; width: 4px; height: 2px; background: #c42b1c; border-radius: 1px; }
.tray { flex: 1; display: flex; align-items: center; padding-left: 26px; color: #222; }
.t-cloud { margin-left: 5px; }
.t-wifi { margin-left: 8px; }
.t-vol { margin-left: 5px; }
.t-bat { margin-left: 3.500px; }
.clock { margin-left: 8.500px; width: 36px; display: flex; flex-direction: column; align-items: flex-end; font-size: 7.800px; line-height: 11px; flex: none; }
.date { font-size: 7px; }
.notif { margin-left: 4.500px; width: 11px; height: 11px; border-radius: 50%; background: #0f6cd0; color: #fff; font-size: 7px; line-height: 11px; text-align: center; flex: none; }
</style>
